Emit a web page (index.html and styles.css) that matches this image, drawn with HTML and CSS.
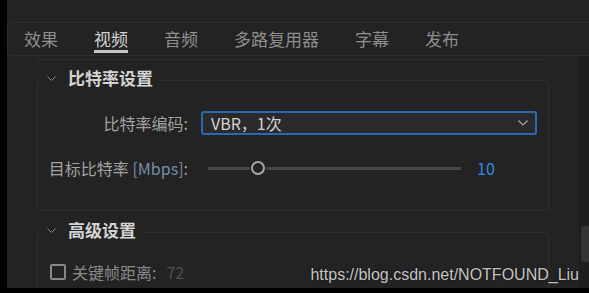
FILE: index.html
```html
<!DOCTYPE html>
<html lang="zh-CN">
<head>
    <meta charset="UTF-8">
    <meta name="viewport" content="width=device-width, initial-scale=1.0">
    <title>导出设置 - 视频</title>
    <link rel="stylesheet" href="styles.css">
</head>
<body>
    <div class="app">
        <div class="topbar"></div>

        <!-- Tab bar -->
        <nav class="tabs">
            <span class="tab">效果</span>
            <span class="tab active">视频</span>
            <span class="tab">音频</span>
            <span class="tab">多路复用器</span>
            <span class="tab">字幕</span>
            <span class="tab">发布</span>
        </nav>

        <div class="content">
            <div class="panel">
                <div class="prev-end"></div>

                <!-- Bitrate settings -->
                <section class="group">
                    <div class="group-head">
                        <svg class="chevron" width="9" height="5" viewBox="0 0 9 5"><path d="M0.5 0.5 L4.5 4.5 L8.5 0.5" /></svg>
                        <span class="group-title">比特率设置</span>
                    </div>
                    <div class="row">
                        <span class="label">比特率编码:</span>
                        <div class="select">
                            <span>VBR，1次</span>
                            <svg class="select-arrow" width="10" height="6" viewBox="0 0 10 6"><path d="M0.5 0.5 L5 5 L9.5 0.5" /></svg>
                        </div>
                    </div>
                    <div class="row row-slider">
                        <span class="label">目标比特率 <span class="unit">[Mbps]</span>:</span>
                        <div class="slider">
                            <div class="track track-left"></div>
                            <div class="thumb"></div>
                            <div class="track"></div>
                        </div>
                        <span class="value">10</span>
                    </div>
                </section>

                <!-- Advanced settings -->
                <section class="group group-adv">
                    <div class="group-head">
                        <svg class="chevron" width="9" height="5" viewBox="0 0 9 5"><path d="M0.5 0.5 L4.5 4.5 L8.5 0.5" /></svg>
                        <span class="group-title">高级设置</span>
                    </div>
                    <div class="check-row">
                        <span class="checkbox"></span>
                        <span class="check-label">关键帧距离:</span>
                        <span class="check-value">72</span>
                    </div>
                </section>
            </div>
            <div class="scrollbar">
                <div class="scroll-thumb"></div>
            </div>
        </div>

        <div class="watermark">https://blog.csdn.net/NOTFOUND_Liu</div>
    </div>
</body>
</html>
```

FILE: styles.css
```css
body {
    margin: 0;
    padding: 0;
    background-color: #000;
    font-family: "Noto Sans CJK SC", "Noto Sans", sans-serif;
}
.app {
    position: relative;
    margin-left: 7px;
    width: 582px;
    height: 288px;
    background-color: #232323;
    overflow: hidden;
}
.topbar {
    height: 22px;
}
.tabs {
    display: flex;
    gap: 36px;
    height: 32px;
    padding-left: 16px;
    border: 1px solid #2e2e2e;
    border-right: none;
    border-radius: 4px 0 0 4px;
}
.tab {
    position: relative;
    font-size: 17px;
    line-height: 32px;
    color: #8e8e8e;
}
.tab.active {
    color: #d2d2d2;
}
.tab.active::after {
    content: "";
    position: absolute;
    left: 0;
    right: 0;
    bottom: 2px;
    height: 3px;
    background-color: #c6c6c6;
}
.content {
    display: flex;
    height: 232px;
}
.panel {
    flex: 1;
    padding: 0 30px;
}
.prev-end {
    height: 3px;
    border: 1px solid #2e2e2e;
    border-top: none;
    border-radius: 0 0 3px 3px;
}
.group {
    margin-top: 20px;
    height: 129px;
    border: 1px solid #303030;
    border-radius: 4px;
}
.group-adv {
    margin-top: 21px;
    height: 200px;
}
.group-head {
    display: flex;
    align-items: center;
    gap: 12px;
    width: max-content;
    height: 18px;
    margin: -12px 0 0 1px;
    padding: 0 6px 0 8px;
    background-color: #232323;
}
.chevron {
    fill: none;
    stroke: #8c8c8c;
    stroke-width: 1;
}
.group-title {
    font-size: 17px;
    font-weight: bold;
    line-height: 18px;
    color: #d4d4d4;
}
.row {
    display: flex;
    align-items: center;
    height: 24px;
    margin-top: 24px;
    padding-right: 11px;
}
.row-slider {
    margin-top: 21px;
}
.label {
    width: 150px;
    flex-shrink: 0;
    text-align: right;
    font-size: 16px;
    color: #a2a2a2;
    white-space: nowrap;
}
.unit {
    color: #7a8ea8;
}
.select {
    flex: 1;
    display: flex;
    align-items: center;
    justify-content: space-between;
    height: 20px;
    margin-left: 13px;
    padding: 0 7px 0 8px;
    border: 2px solid #2a68b8;
    border-radius: 3px;
    background-color: #2a2a2a;
    font-size: 16px;
    color: #d2d2d2;
}
.select-arrow {
    fill: none;
    stroke: #a8a8a8;
    stroke-width: 1.2;
}
.slider {
    display: flex;
    align-items: center;
    width: 253px;
    margin-left: 20px;
}
.track {
    flex: 1;
    height: 3px;
    background-color: #474747;
}
.track-left {
    flex: none;
    width: 42px;
}
.thumb {
    width: 10px;
    height: 10px;
    margin: 0 1px;
    border: 2.5px solid #a6a6a6;
    border-radius: 50%;
    background-color: #232323;
}
.value {
    margin-left: 16px;
    font-size: 16px;
    color: #2f8ae6;
}
.check-row {
    display: flex;
    align-items: center;
    height: 18px;
    margin-top: 24px;
    padding-left: 12px;
}
.checkbox {
    width: 12px;
    height: 12px;
    border: 2px solid #888;
    border-radius: 2px;
}
.check-label {
    margin-left: 6px;
    font-size: 16px;
    color: #8a8a8a;
}
.check-value {
    margin-left: 10px;
    font-size: 16px;
    color: #505050;
}
.scrollbar {
    width: 10px;
    background-color: #1e1e1e;
}
.scroll-thumb {
    height: 36px;
    margin: 170px 0 0 2px;
    border-radius: 4px 0 0 4px;
    background-color: #343434;
}
.watermark {
    position: absolute;
    right: 10px;
    bottom: 4px;
    font-family: "Liberation Sans", Arial, sans-serif;
    font-size: 16px;
    color: #c4c4c4;
    text-shadow: 0 0 2px rgba(0, 0, 0, 0.6);
}
```
